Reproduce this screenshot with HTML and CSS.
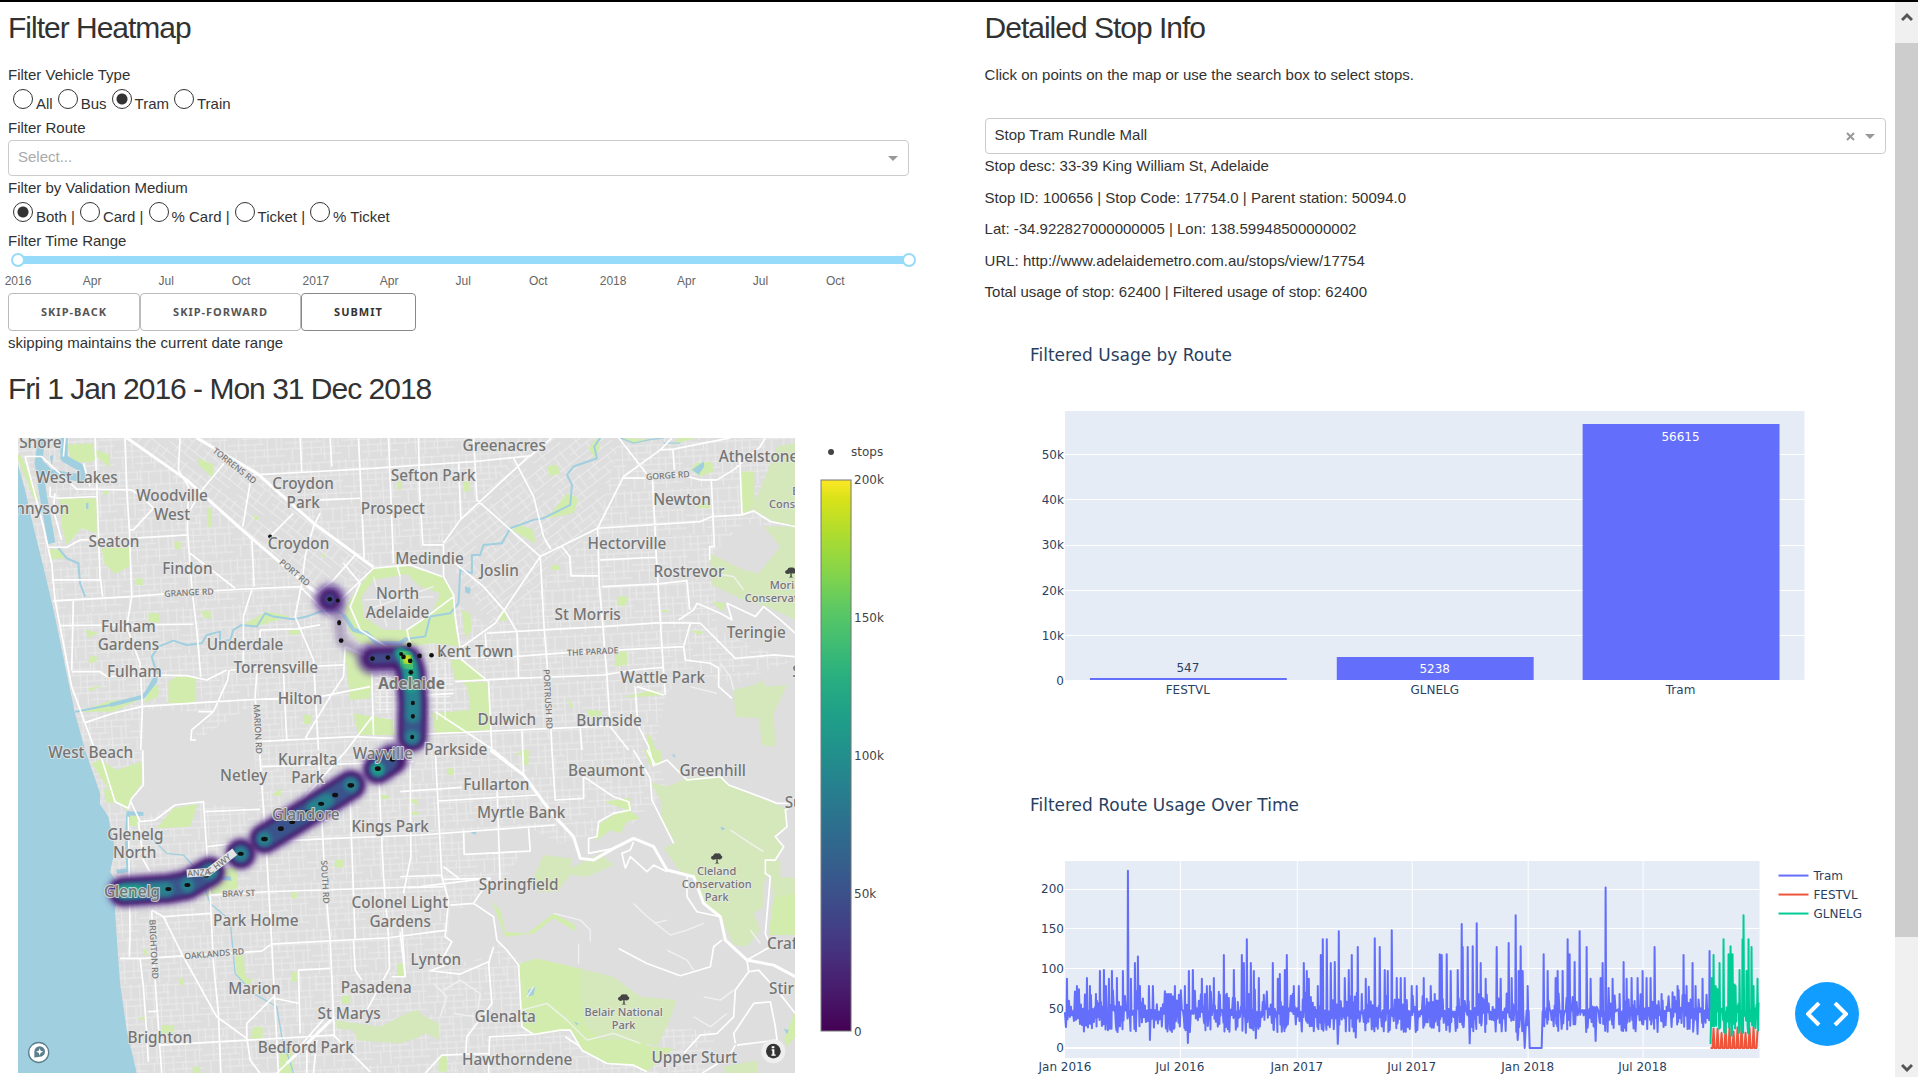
FILE: index.html
```html
<!DOCTYPE html>
<html lang="en">
<head>
<meta charset="utf-8">
<title>Filter Heatmap</title>
<link rel="stylesheet" href="styles.css">
</head>
<body>
<div class="frame">
<main class="content">
<section class="column">
  <h1 class="title">Filter Heatmap</h1>
  <div class="line">Filter Vehicle Type</div>
  <div class="radios" role="radiogroup" aria-label="Filter Vehicle Type">
    <label><input type="radio" name="vehicle"><span>All</span></label>
    <label><input type="radio" name="vehicle"><span>Bus</span></label>
    <label><input type="radio" name="vehicle" checked><span>Tram</span></label>
    <label><input type="radio" name="vehicle"><span>Train</span></label>
  </div>
  <label class="line" for="route">Filter Route</label>
  <div class="picker">
    <select id="route" class="empty"><option>Select...</option></select>
    <span class="caret"></span>
  </div>
  <div class="line">Filter by Validation Medium</div>
  <div class="radios" role="radiogroup" aria-label="Filter by Validation Medium">
    <label><input type="radio" name="medium" checked><span>Both |</span></label>
    <label><input type="radio" name="medium"><span>Card |</span></label>
    <label><input type="radio" name="medium"><span>% Card |</span></label>
    <label><input type="radio" name="medium"><span>Ticket |</span></label>
    <label><input type="radio" name="medium"><span>% Ticket</span></label>
  </div>
  <div class="line">Filter Time Range</div>
  <div class="slider">
    <div class="rail">
      <input type="range" min="0" max="1095" value="0" aria-label="Range start">
      <input type="range" min="0" max="1095" value="1095" aria-label="Range end">
    </div>
    <div class="marks">
      <span style="left:0%">2016</span><span style="left:8.31%">Apr</span><span style="left:16.62%">Jul</span><span style="left:25.02%">Oct</span>
      <span style="left:33.42%">2017</span><span style="left:41.64%">Apr</span><span style="left:49.95%">Jul</span><span style="left:58.36%">Oct</span>
      <span style="left:66.76%">2018</span><span style="left:74.98%">Apr</span><span style="left:83.29%">Jul</span><span style="left:91.69%">Oct</span>
    </div>
  </div>
  <div class="buttons"><button>Skip-back</button><button>Skip-forward</button><button class="strong">Submit</button></div>
  <div class="line">skipping maintains the current date range</div>
  <h2 class="title range">Fri 1 Jan 2016 - Mon 31 Dec 2018</h2>

  <div class="mapplot">
  <svg class="map" viewBox="54 24 2331 1905" preserveAspectRatio="xMidYMid slice" role="img" aria-label="Heatmap of Adelaide stops">
    <defs>
      <pattern id="streets" width="170" height="140" patternUnits="userSpaceOnUse" patternTransform="rotate(-3)">
        <path d="M0 8H170M0 30H80M0 48H170M40 66H170M0 84H110M0 102H170M60 122H170M10 0V48M32 8V102M52 48V140M74 0V66M80 84V140M98 8V84M118 48V140M134 0V48M146 66V122M160 0V102M22 102V140M108 102V122M64 8V30" class="lane"/>
      </pattern>
      <pattern id="diagonal" width="130" height="90" patternUnits="userSpaceOnUse" patternTransform="rotate(38)">
        <path d="M0 10H130M0 32H90M0 54H130M30 74H130M16 10V54M40 0V32M62 32V90M88 10V74M112 0V54" class="lane"/>
      </pattern>
      <pattern id="slant" width="130" height="90" patternUnits="userSpaceOnUse" patternTransform="rotate(-38)">
        <path d="M0 10H130M0 32H90M0 54H130M30 74H130M16 10V54M40 0V32M62 32V90M88 10V74M112 0V54" class="lane"/>
      </pattern>
      <filter id="soft" x="-20%" y="-20%" width="140%" height="140%"><feGaussianBlur stdDeviation="6"/></filter>
      <filter id="haze" x="-20%" y="-20%" width="140%" height="140%"><feGaussianBlur stdDeviation="9"/></filter>
    </defs>
    <rect x="54" y="24" width="2331" height="1905" class="land"/>
    <rect x="54" y="24" width="2331" height="1905" fill="url(#streets)"/>
    <path class="land" d="M590 24L1120 412L950 490L560 150L380 24ZM1590 24L1860 24L1790 295L1480 600L1260 440L1330 340Z"/>
    <path fill="url(#diagonal)" d="M590 24L1120 412L950 490L560 150L380 24Z"/>
    <path fill="url(#slant)" d="M1590 24L1860 24L1790 295L1480 600L1370 440L1330 340Z"/>
    <!-- airport, hills and other land without streets -->
    <path class="land" d="M430 836L640 848L575 930L590 930L750 830L778 1138L610 1118L520 1128L415 1170L395 1110L430 1060ZM2000 790L2060 730L2110 740L2200 760L2385 690L2385 1929L2110 1929L2150 1800L1900 1790L1740 1780L1560 1590L1440 1500L1380 1420L1500 1380L1600 1200L1680 1240L1900 1180L2000 1080L1960 960ZM1395 1200L1585 1195L1588 1265L1395 1272ZM2140 370L2230 280L2385 300L2385 700L2150 600ZM1350 1430L1440 1440L1500 1560L1400 1600L1340 1560Z"/>
    <!-- sea -->
    <path class="water" d="M54 105L75 180L100 290L130 410L165 560L200 730L225 850L255 960L300 1090L300 1122L325 1160L345 1260L330 1325L358 1370L345 1440L350 1520L360 1660L380 1800L410 1929L54 1929Z"/>
    <g class="park">
      <path d="M54 70L70 90L115 200L105 215L54 90ZM200 45L280 40L285 90L270 98L215 94ZM180 205L290 205L290 310L245 295L200 345L185 290ZM305 355L388 352L388 410L345 432L312 400ZM148 358L180 358L198 385L155 388ZM595 85L640 105L640 145L595 105ZM620 235H635V292H622ZM445 550H480V578H445ZM505 755L530 740L588 742V820H505ZM455 770L475 765V800L430 820ZM600 543H632V565H615ZM912 855H935V882H912ZM240 845L330 812L420 808L340 845ZM522 335H542V358H525ZM408 445H428V465H408ZM285 60L330 75V115L290 80ZM258 598L295 610L262 625ZM310 183H325V195H310ZM760 255L778 262L765 275ZM965 370L978 375L970 388ZM735 580L800 545L870 560L760 592ZM865 600H900V612L870 615ZM265 775L310 765L270 785ZM268 680L290 678V695L265 700Z"/>
      <path d="M1120 415L1210 405L1325 440L1360 490L1365 600L1380 650L1300 640L1230 650L1160 655L1080 640L1045 600L1035 530L1085 460ZM1035 660L1100 680L1115 730L1110 805L1050 810L1040 720ZM1060 850L1120 860L1180 870L1185 915L1075 915ZM1385 757L1465 757L1470 900L1305 910L1295 850L1410 840L1402 770ZM1350 690H1380L1430 720L1455 750H1365ZM1385 540L1410 550L1415 600L1395 625ZM1500 550L1515 545L1520 570L1500 575Z"/>
      <path d="M1640 110L1670 105L1680 130L1650 140ZM1700 190L1735 205L1720 250L1640 265ZM1535 300L1560 285L1600 300L1605 340ZM1655 405H1678V420H1655ZM1850 500L1885 500L1875 530L1850 525ZM1845 665L1880 665V705L1843 710ZM1985 540H2005V546H1985ZM2070 600L2115 605L2095 615ZM2085 100L2135 95L2140 125L2100 140L2070 120ZM2220 125H2262V220L2235 250L2222 245ZM1190 155H1205V180H1190ZM1390 155H1410V185H1390ZM2135 515L2175 520L2165 545ZM1870 800L1960 780L1995 795L1900 802ZM1760 840L1805 842L1800 860L1765 860ZM1700 800L1720 830L1710 835ZM1940 905L1955 925L1980 1000L1945 1005ZM1560 960H1585V1005H1572ZM1765 55L1790 24L1800 50L1785 85ZM1860 24L1960 30L1900 42ZM2020 45L2035 24L2090 24L2000 48ZM2090 225L2130 215V235H2095Z"/>
      <path d="M275 1000L300 990L350 1020L425 995V1060L390 1110L380 1140L350 1115ZM310 1080L340 1075L345 1118H320ZM470 1195L520 1135L593 1122L570 1190ZM385 1155L412 1160V1188H385ZM655 1320L710 1310L715 1375L605 1400L640 1360ZM705 1570L730 1560L735 1640L760 1650L740 1670L710 1630ZM815 1095L840 1075L845 1098ZM760 1790H788V1825H750ZM485 1785H522V1810H485ZM410 1765L435 1758V1770ZM1005 1290L1030 1288V1312H1002ZM875 1385H890V1405H875ZM1140 1095H1165V1108H1142ZM1220 1108H1250L1255 1130ZM535 1645L550 1642V1665H540ZM430 1557H440V1575H430ZM578 1910H600V1929H578ZM875 1625H890V1655H875ZM1192 1600H1210V1640H1190ZM840 1860L875 1855L880 1929H835ZM1025 1700L1050 1695V1720H1025Z"/>
      <path d="M1558 1600L1610 1585L1740 1615L1745 1660L1755 1760L1800 1820L1900 1820L1950 1850L2020 1855L1940 1925L1900 1905L1820 1900L1745 1860L1710 1800L1600 1813L1565 1790ZM1475 1415L1500 1440L1515 1505L1580 1510L1660 1450L1720 1480L1730 1505L1660 1465L1600 1510L1515 1520ZM1785 1235L1800 1180L1840 1155L1880 1140L1810 1115L1890 1103L1892 1145L1920 1165L1880 1175L1860 1210L1830 1200ZM1235 1145H1255V1155H1235ZM2320 1400L2385 1390V1515H2305ZM1930 960L1980 960L1985 1000L1950 1005ZM1540 975H1585V960H1575ZM1340 1015H1360V1035H1340ZM1315 1875L1340 1880V1925H1315ZM2330 1780L2350 1830L2385 1740V1820L2360 1850Z"/>
    </g>
    <g class="reserve">
      <path d="M2330 50L2385 40V295L2320 275L2262 240L2235 255L2275 190ZM2128 370L2230 420L2275 430L2340 350L2290 290L2385 290V570L2300 530L2230 510L2135 465ZM2200 780L2260 765L2290 750L2295 770L2360 765L2320 850L2325 950L2285 945L2275 865L2205 860Z"/>
      <path d="M1950 1055L2000 1070L2060 1045L2160 1035L2185 1065L2355 1135L2360 1190L2325 1220L2350 1250L2325 1290L2290 1360L2290 1430L2260 1450L2280 1500L2240 1550L2200 1545L2160 1460L2110 1420L2080 1335L2040 1325L1990 1255L2025 1235L1980 1170L1985 1120ZM2300 1290H2340V1340L2385 1345V1390L2320 1400ZM1740 1615L1840 1640L1920 1700L2030 1710L2000 1790L1970 1850L1900 1830L1800 1830L1750 1780ZM1600 1340L1630 1275L1715 1285L1710 1315L1800 1270L1840 1305L1760 1340L1710 1335L1670 1385L1610 1385ZM1200 1770L1250 1745L1315 1780L1320 1830L1280 1810L1200 1830ZM1005 1770L1140 1790L1230 1745L1260 1740V1820L1200 1840L1070 1830L1060 1800L1010 1795ZM2170 1910L2270 1890V1929H2175Z"/>
    </g>
    <path class="land" d="M1085 500L1120 450L1220 432L1260 470L1320 490L1300 540L1220 600L1150 600L1090 560Z"/>
    <g class="river">
      <path d="M1800 24L1782 50L1790 85L1720 110L1700 135L1715 165L1710 225L1630 265L1600 270L1530 295L1505 340L1450 345L1440 375L1415 375V430L1380 420L1375 520L1350 550L1290 560L1275 620L1230 625L1200 635"/>
      <path d="M1030 555L1010 540L960 545L920 560L880 568L820 560L795 550L770 590L725 585L700 600L690 630L660 635V605L620 615L605 640L560 645L520 632L475 650L455 680L470 730L430 800L330 825L225 845M175 355L200 385L235 400L240 460L255 500"/>
      <path class="wide" d="M1220 625L1200 640L1130 640L1100 610L1060 600L1030 555M470 720L465 755L430 800L330 825M385 1145L380 1220L385 1320L350 1325M385 1150L430 1152"/>
      <path class="lake" d="M125 24L115 100L130 200L155 340M192 24V85L245 115V145L150 130L110 90"/>
      <path class="thin" d="M430 1200L500 1270L550 1275L600 1330L630 1420L690 1470L705 1630L760 1690L830 1730L845 1820L880 1929M1860 24L1900 40L1945 30L1990 24M1990 40L2040 40"/>
    </g>
    <path class="water" d="M2075 120L2110 95L2112 110L2095 135ZM1585 1680L1605 1670L1600 1695L1580 1700ZM2160 1190L2175 1195L2165 1202ZM1410 1205L1430 1203L1425 1215ZM2015 975L2025 985L2022 972ZM665 1340L690 1338L695 1352L660 1350ZM258 220L265 218V240L258 235ZM150 80L160 75L155 110ZM2350 1795L2365 1800L2360 1812ZM1720 1775L1735 1780L1730 1785ZM1395 470L1412 475L1408 492L1395 488Z"/>
    <g class="minorroad">
      <path d="M1900 1420L1935 1455L2010 1515L2060 1500L2110 1480M1660 1450L1740 1470L1770 1500V1535M1735 1540V1600M1565 1740L1640 1720L1700 1770L1760 1830L1840 1810L1920 1840M1580 1700L1600 1670M2140 430L2200 440L2230 480M2160 700L2190 740L2200 780M2000 1560L2060 1590L2080 1620M2110 1700L2160 1710L2200 1680M2250 1500L2280 1540M1330 1680L1380 1650L1440 1690L1430 1760L1360 1750M1300 1660L1340 1700L1320 1760M2080 1760L2130 1790L2180 1750M2190 1200L2250 1240L2290 1265M2070 770L2150 790M1960 1480L2000 1470"/>
      <path d="M1125 745H1360M1125 762H1360M1125 780H1360M1125 800H1350M1125 818H1350M1125 838H1350M1140 720V850M1160 720V850M1180 720V910M1290 700V860M1310 690V870M1335 690V870M1120 440L1160 590M1090 510L1300 500M1200 440V600M1100 540L1300 470"/>
    </g>
    <g class="road">
      <path d="M75 80H125L230 178L395 180L430 205L460 235L400 300H390M285 24L300 440L308 500M375 24L380 180L388 300L395 500L380 590L420 700L427 830L422 960M75 80L130 290L155 400L165 510L215 770L255 880L285 960M145 352H200L240 330L390 325L565 315M540 24L535 120L565 170L562 300L575 470L590 600L602 740M570 370L705 475M160 513L390 500L520 490L720 478L900 470M750 160L728 290M755 320L762 470M672 100L610 175L570 240M900 24L905 125M760 135L950 125L1080 118L1425 95L1590 78L1655 24M1075 24L1092 385M990 24L995 110M1165 24L1180 400M955 210L1080 205M960 250L940 290L915 380L905 460L885 560L940 690L955 960M880 250L810 320M1070 370L1000 450L950 490M1120 415L1010 520M180 587L580 583M220 510L215 720M215 725H300L320 740L480 735L560 737L620 750L680 720M687 720L683 750L640 845H595M640 845L575 900L572 930H588M255 878L340 850L425 830L600 818L730 810L960 800L1110 770M755 480L730 560V700M780 600L890 597L960 585M780 600V650M690 720L1035 705M770 730L765 800L775 935M770 935L1060 920L1180 925M850 730L860 930M1035 650L1030 740L990 800L915 925M1120 855L1040 960L870 1150M1115 730L1120 915M1035 650L1110 685M900 470L990 560M155 450H305M150 170V200L180 205L290 200M165 190L160 240L185 330M930 470L1010 530M195 25L190 80M250 100L270 170M1030 400L1080 460L1050 530L1080 600L1160 650M1200 440L1190 405M1120 415L1230 405L1325 440"/>
      <path d="M1255 24L1258 180L1268 345H1330V440L1360 495L1365 560L1385 690L1465 755L1475 960M1590 75L1380 270L1330 340M1420 24L1430 210L1620 380M1540 85L1600 200L1630 320L1652 358M1375 100L1382 270M1620 380L1792 295L1870 140L1980 60L2015 24M1620 380L1632 600L1645 760L1655 960M1620 380L1485 580L1380 655M1365 400L1450 470L1515 545L1550 605L1555 745M1792 295L1797 470L1808 590L1820 740L1830 890L1885 960M1855 24L1957 155L1968 380L1980 570L1990 730L1995 795M1792 295L2100 275L2135 260L2225 255L2260 243L2310 275L2385 290M1870 145H1930L2000 130L2060 140L2100 150H2150L2200 120L2280 50L2295 24M1980 60L2020 58L2160 30L2190 24M2018 60L2022 120M2133 150L2142 350H2128V390M1800 390L1968 382M1805 470L1975 462L2060 452L2068 540M1685 350L1708 380L1712 438H1795M1460 610L1630 600L1810 590L1980 578L2100 580L2150 630L2205 685L2320 675L2385 680M1350 685L1540 680L1700 668L2050 650M1365 755L1550 745L1810 735L1900 720L1990 712M2218 80L2225 255M2070 580L2050 650L2055 690L2130 700L2155 715V770L2195 805M2035 570L2080 540L2090 520L2160 550L2195 570L2180 520L2265 560L2290 530L2340 570L2385 610M1275 912L1660 895L1830 888L1910 880L1945 950L1960 1010M1910 770L1990 795M1905 770L1912 880M1305 845L1480 960L1570 1035M1740 895L1745 960M1565 900L1570 1030M1230 640L1220 600L1280 560L1360 500M1455 610L1460 690M1200 800L1360 790"/>
      <path d="M300 970L345 1115L385 1135L395 1105L430 1065L428 960M390 1110L420 1175L465 1170L525 1125L610 1115L620 1260L630 1390L640 1600L655 1750L662 1929M615 1145L780 1138M778 960L800 1280L815 1540L835 1929M630 1395L800 1385L1260 1370L1460 1345M620 1250L700 1240L1000 1225L1260 1215L1665 1185M955 970L975 1360L990 1530L1003 1820M1050 1110L1065 1530M1135 1020L1150 1340L1165 1520M810 1542L1165 1523L1340 1500M385 1160L390 1520L388 1580M455 1440L460 1580L485 1929M455 1440L490 1460L550 1580L650 1760L740 1825M485 1460L630 1450M360 1585H430L785 1563L810 1545M420 1585L430 1670L440 1810L445 1895M445 1745L475 1743M480 1845L740 1830L1000 1815L1110 1925M825 1695L740 1780V1820L750 1890L780 1929M825 1705L900 1720M895 1620L900 1810M895 1620L990 1615M1000 1760L860 1900L830 1929M985 1750L890 1860M1060 1530L1065 1620L1085 1650M1165 1520L1168 1615L1100 1740M415 1175L430 1290L450 1325M920 1860V1929M950 1830L940 1929M785 1010L1240 995M1205 1480L1215 1640H1175"/>
      <path d="M1200 1085L1385 1072M1315 1113L1610 1095M1655 960L1665 1110L1750 1105V1040L1840 1100L1885 1115L1890 1140L1840 1150L1795 1175L1790 1220L1765 1225V1270L1840 1255M1900 960L1950 1045L1955 1110L1990 1180L2020 1240M1940 960L1965 1005L2000 990L2060 1050L2160 1040L2185 1065L2280 1100L2330 1120H2385M2385 1120L2355 1140L2360 1190L2325 1220L2350 1250L2325 1290H2295V1330L2310 1340L2295 1510L2310 1550L2240 1590M1390 1200L1392 1273L1590 1263L1585 1195M1490 1060L1500 1360M1305 960L1325 1340L1345 1410L1335 1520L1355 1535L1330 1580L1350 1600L1290 1622L1380 1632L1465 1595M1330 1348L1470 1345L1420 1420L1350 1425M1330 1310L1380 1348M1420 1420L1480 1460L1490 1530L1520 1560L1555 1605L1565 1790L1600 1813L1680 1800L1710 1800L1745 1860L1820 1900L1900 1905L1940 1925M1480 1550L1465 1600L1475 1720L1400 1820L1395 1890M1465 1929L1468 1820L1600 1813M1275 1929L1325 1875L1465 1870M1855 1555L1940 1600L2040 1637L2130 1610L2140 1550L2165 1530M1875 1315L1865 1270L1890 1260L1900 1235M1875 1315L1890 1280L1940 1325L1960 1305L2000 1325M2060 1340V1400L2090 1445L2160 1460M2240 1590L2245 1625L2205 1680L2200 1760L2150 1810L2100 1815L2050 1870M2245 1625L2275 1620L2330 1680L2385 1750M2205 1840L2200 1810L2260 1720L2310 1715L2325 1790L2330 1830L2210 1845M1695 1820L1740 1850M1230 1000L1232 1280L1210 1390M1200 1505L1215 1640M1200 1340L1325 1335M1220 1373L1330 1370M2205 1845L2185 1880L2105 1929"/>
    </g>
    <g class="highway">
      <path d="M380 24L560 150L720 295L950 492M590 24L770 130L940 280L1120 412M1470 960L1570 1035L1655 1150L1720 1220L1740 1285L1780 1290L1840 1255L1900 1225L1960 1250L2000 1320L2080 1340L2110 1420L2160 1460L2175 1530L2240 1590L2320 1605L2385 1640M1003 1760L860 1900"/>
    </g>
    <!-- density along the tram line -->
    <g class="faint" filter="url(#haze)"><path d="M989 508L1015 530L1017 578L1023 632L1070 665"/></g>
    <g class="heat" filter="url(#haze)" stroke="#5d3a94" stroke-width="96" opacity=".75"><path d="M370 1385L505 1376L562 1365L630 1325M722 1271V1272M793 1226L843 1196L963 1121L1052 1065M1133 1017L1180 985M1236 920L1238 819L1232 727L1222 692L1163 684L1117 686M989 508V509"/></g>
    <g class="heat" filter="url(#soft)" stroke="#46186b" stroke-width="80"><path d="M370 1385L505 1376L562 1365L630 1325M722 1271V1272M793 1226L843 1196L963 1121L1052 1065M1133 1017L1175 990M1236 920L1238 819L1232 727L1220 694"/></g>
    <g class="heat" filter="url(#soft)" stroke="#46186b" stroke-width="60"><path d="M1210 684L1163 684L1117 686M989 508V509"/></g>
    <g class="heat" filter="url(#soft)" stroke="#404a88" stroke-width="34"><path d="M1210 680L1163 684L1120 686M989 508V509"/></g>
    <g class="heat" filter="url(#soft)" stroke="#3b528b" stroke-width="58"><path d="M370 1385L505 1376L562 1365L630 1325M722 1271V1272M793 1226L843 1196L963 1121L1052 1065M1133 1017L1165 995M1236 920L1238 819L1232 727L1220 690"/></g>
    <g class="heat" filter="url(#soft)" stroke="#26828e" stroke-width="42"><path d="M372 1385L500 1377M562 1365V1366M630 1326V1327M722 1271V1272M793 1226V1227M940 1135L980 1111M1052 1065V1066M1133 1017V1018M1236 920V921M1238 860L1238 800L1232 727L1215 680"/></g>
    <g class="heat" filter="url(#soft)" stroke="#1fa187" stroke-width="34"><path d="M365 1383L410 1382M1133 1017V1018M1234 770L1230 700L1200 668"/></g>
    <g class="heat" filter="url(#soft)" stroke="#4ac16d" stroke-width="36"><path d="M1231 708L1206 672"/></g>
    <g class="heat" filter="url(#soft)" stroke="#d2e21b" stroke-width="26"><path d="M1229 696L1214 680"/></g>
    <g class="stops">
      <circle cx="810" cy="320" r="6"/><circle cx="989" cy="508" r="7"/><circle cx="1013" cy="512" r="6"/><ellipse cx="1017" cy="578" rx="6" ry="8"/><circle cx="1023" cy="632" r="7"/><circle cx="1117" cy="686" r="7"/><circle cx="1163" cy="683" r="7"/><circle cx="1203" cy="672" r="6"/><circle cx="1210" cy="681" r="7"/><circle cx="1230" cy="693" r="7"/><circle cx="1227" cy="645" r="7"/><circle cx="1258" cy="678" r="7"/><circle cx="1294" cy="676" r="7"/><circle cx="1322" cy="674" r="6"/><circle cx="1232" cy="727" r="7"/><ellipse cx="1238" cy="819" rx="6" ry="7"/><ellipse cx="1238" cy="859" rx="6" ry="7"/><ellipse cx="1236" cy="921" rx="6" ry="7"/>
      <ellipse cx="1133" cy="1016" rx="9" ry="7"/><ellipse cx="1177" cy="988" rx="9" ry="7"/><ellipse cx="1052" cy="1066" rx="10" ry="7"/><ellipse cx="1005" cy="1095" rx="9" ry="7"/><ellipse cx="963" cy="1121" rx="9" ry="6"/><ellipse cx="925" cy="1145" rx="9" ry="6"/><ellipse cx="876" cy="1176" rx="9" ry="6"/><ellipse cx="842" cy="1196" rx="9" ry="7"/><ellipse cx="793" cy="1227" rx="10" ry="7"/><ellipse cx="722" cy="1271" rx="9" ry="6"/><ellipse cx="640" cy="1320" rx="10" ry="6"/><ellipse cx="618" cy="1336" rx="9" ry="6"/><ellipse cx="562" cy="1365" rx="9" ry="6"/><ellipse cx="505" cy="1377" rx="9" ry="6"/>
    </g>
    <g class="place">
      <text x="121" y="54">Shore</text><text x="230" y="160">West Lakes</text><text x="207" y="252" class="end">Tennyson</text>
      <text x="516" y="214">Woodville</text><text x="516" y="270">West</text><text x="342" y="352">Seaton</text><text x="562" y="433">Findon</text>
      <text x="909" y="177">Croydon</text><text x="909" y="233">Park</text><text x="895" y="357">Croydon</text>
      <text x="385" y="605">Fulham</text><text x="385" y="661">Gardens</text><text x="403" y="740">Fulham</text>
      <text x="735" y="659">Underdale</text><text x="827" y="730">Torrensville</text><text x="900" y="823">Hilton</text><text x="272" y="984">West Beach</text>
      <text x="1299" y="154">Sefton Park</text><text x="1178" y="253">Prospect</text><text x="1288" y="401">Medindie</text>
      <text x="1192" y="508">North</text><text x="1192" y="564">Adelaide</text><text x="1512" y="64">Greenacres</text><text x="2155" y="97" class="start">Athelstone</text>
      <text x="2045" y="225">Newton</text><text x="1880" y="356">Hectorville</text><text x="2066" y="441">Rostrevor</text><text x="1497" y="438">Joslin</text>
      <text x="1762" y="571">St Morris</text><text x="2268" y="624">Teringie</text><text x="1425" y="682">Kent Town</text><text x="1234" y="776" class="city">Adelaide</text>
      <text x="1987" y="760">Wattle Park</text><text x="1520" y="885">Dulwich</text><text x="1826" y="888">Burnside</text><text x="1367" y="974">Parkside</text>
      <text x="1148" y="987">Wayville</text><text x="923" y="1005">Kurralta</text><text x="923" y="1060">Park</text><text x="731" y="1053">Netley</text>
      <text x="917" y="1171">Glandore</text><text x="1170" y="1205">Kings Park</text><text x="406" y="1229">Glenelg</text><text x="404" y="1285">North</text><text x="396" y="1401">Glenelg</text>
      <text x="767" y="1489">Park Holme</text><text x="1199" y="1434">Colonel Light</text><text x="1200" y="1490">Gardens</text><text x="763" y="1692">Marion</text>
      <text x="1128" y="1688">Pasadena</text><text x="1047" y="1766">St Marys</text><text x="1307" y="1606">Lynton</text><text x="479" y="1839">Brighton</text><text x="917" y="1869">Bedford Park</text>
      <text x="1818" y="1038">Beaumont</text><text x="2137" y="1037">Greenhill</text><text x="1488" y="1081">Fullarton</text><text x="1563" y="1165">Myrtle Bank</text>
      <text x="1555" y="1379">Springfield</text><text x="1515" y="1777">Glenalta</text><text x="1551" y="1905">Hawthorndene</text><text x="2082" y="1899">Upper Sturt</text>
      <text x="2353" y="1133" class="start">Summertown</text><text x="2300" y="1557" class="start">Crafers</text><text x="2306" y="1692" class="start">Stirling</text><text x="2376" y="740" class="start">S</text>
    </g>
    <g class="place small">
      <text x="2149" y="1334">Cleland</text><text x="2149" y="1374">Conservation</text><text x="2149" y="1414">Park</text>
      <text x="1870" y="1758">Belair National</text><text x="1870" y="1798">Park</text>
      <text x="2308" y="478" class="start">Morialta</text><text x="2233" y="517" class="start">Conservation</text><text x="2376" y="194" class="start">B</text><text x="2306" y="234" class="start">Conservation</text>
    </g>
    <g class="tree">
      <path id="tree" d="M2133 1286q-3-7 5-9q4-9 13-7q10-2 11 6q7 3 2 9q-5 5-12 2v10l5 3h-14l5-3v-10q-10 5-15-1z"/>
      <use href="#tree" x="-279" y="423"/><use href="#tree" x="222" y="-857"/>
    </g>
    <g class="street">
      <text transform="translate(698 115) rotate(38)">TORRENS RD</text><text transform="translate(878 435) rotate(40)">PORT RD</text>
      <text transform="translate(567 497) rotate(-3)">GRANGE RD</text><text transform="translate(764 898) rotate(87)">MARION RD</text>
      <text transform="translate(2003 146) rotate(-4)">GORGE RD</text><text transform="translate(1778 674) rotate(-3)">THE PARADE</text>
      <text transform="translate(1634 808) rotate(87)">PORTRUSH RD</text><text transform="translate(716 1399) rotate(-2)">BRAY ST</text>
      <text transform="translate(966 1356) rotate(87)">SOUTH RD</text><text transform="translate(643 1580) rotate(-5)">OAKLANDS RD</text>
      <text transform="translate(452 1558) rotate(87)">BRIGHTON RD</text>
      <path class="band" d="M560 1330L625 1326L704 1265"/>
      <path id="anzac" d="M562 1339L630 1335L716 1268" fill="none"/>
      <text class="start bare"><textPath href="#anzac">ANZAC HWY</textPath></text>
    </g>
    <g><circle cx="116" cy="1867" r="30" fill="#fff" stroke="#5b7f8d" stroke-width="4"/><path d="M103 1882V1864a16 16 0 1 1 16 16Z" fill="#5b7f8d"/><path d="M119 1854l3 8 8 3-8 3-3 8-3-8-8-3 8-3z" fill="#fff"/></g>
    <g><circle cx="2319" cy="1863" r="36" fill="#eee"/><circle cx="2319" cy="1863" r="22" fill="#333"/><path d="M2314 1857h8v16h4v4h-13v-4h3v-12h-3zM2314 1848h8v6h-8z" fill="#fff"/></g>
  </svg>
  <svg class="scale" viewBox="0 0 114 635" role="img" aria-label="Colour scale">
    <defs><linearGradient id="viridis" x1="0" y1="1" x2="0" y2="0">
      <stop offset="0" stop-color="#440154"/><stop offset=".065" stop-color="#48186a"/><stop offset=".13" stop-color="#472d7b"/><stop offset=".19" stop-color="#424086"/><stop offset=".255" stop-color="#3b528b"/><stop offset=".32" stop-color="#33638d"/><stop offset=".385" stop-color="#2c728e"/><stop offset=".45" stop-color="#26828e"/><stop offset=".51" stop-color="#21918c"/><stop offset=".575" stop-color="#1fa088"/><stop offset=".64" stop-color="#28ae80"/><stop offset=".7" stop-color="#3fbc73"/><stop offset=".77" stop-color="#5ec962"/><stop offset=".83" stop-color="#84d44b"/><stop offset=".9" stop-color="#addc30"/><stop offset=".965" stop-color="#d8e219"/><stop offset="1" stop-color="#fde725"/>
    </linearGradient></defs>
    <circle cx="36" cy="14" r="3" fill="#444"/>
    <rect x="26" y="42" width="30" height="551" fill="url(#viridis)" stroke="#777"/>
    <g class="tick dark"><text x="56" y="18">stops</text><text x="59" y="46">200k</text><text x="59" y="184">150k</text><text x="59" y="322">100k</text><text x="59" y="460">50k</text><text x="59" y="598">0</text></g>
  </svg>
  </div>
</section>

<section class="column">
  <h1 class="title">Detailed Stop Info</h1>
  <label class="line hint" for="stop">Click on points on the map or use the search box to select stops.</label>
  <div class="picker">
    <select id="stop"><option>Stop Tram Rundle Mall</option></select>
    <button class="clear" aria-label="Clear"><svg width="9" height="9" viewBox="0 0 9 9"><path d="M1 1L8 8M8 1L1 8" stroke="#999" stroke-width="2"/></svg></button>
    <span class="caret"></span>
  </div>
  <div class="details">
    <p>Stop desc: 33-39 King William St, Adelaide</p>
    <p>Stop ID: 100656 | Stop Code: 17754.0 | Parent station: 50094.0</p>
    <p>Lat: -34.922827000000005 | Lon: 138.59948500000002</p>
    <p>URL: http://www.adelaidemetro.com.au/stops/view/17754</p>
    <p>Total usage of stop: 62400 | Filtered usage of stop: 62400</p>
  </div>
  <svg class="chart" viewBox="0 0 902 450" role="img" aria-label="Filtered Usage by Route">
    <text class="charttitle" x="45" y="57">Filtered Usage by Route</text>
    <rect class="plot" x="80" y="107" width="740" height="269"/>
    <path class="grid" d="M80 150.5H820M80 195.5H820M80 241.5H820M80 286.5H820M80 331.5H820"/>
    <path class="bar" d="M105 374H302V376H105ZM352 353H549V376H352ZM598 120H795V376H598Z"/>
    <g class="tick end"><text x="79" y="155">50k</text><text x="79" y="200">40k</text><text x="79" y="245">30k</text><text x="79" y="291">20k</text><text x="79" y="336">10k</text><text x="79" y="381">0</text></g>
    <g class="tick mid"><text x="203" y="368">547</text><text x="450" y="369" class="white">5238</text><text x="696" y="137" class="white">56615</text><text x="203" y="390">FESTVL</text><text x="450" y="390">GLNELG</text><text x="696" y="390">Tram</text></g>
  </svg>
  <svg class="chart" viewBox="0 0 902 450" role="img" aria-label="Filtered Route Usage Over Time">
    <text class="charttitle" x="45" y="57">Filtered Route Usage Over Time</text>
    <rect class="plot" x="80" y="107" width="695" height="197"/>
    <path class="grid" d="M80 135.5H775M80 174.5H775M80 214.5H775M80 254.5H775M195.5 107V304M312.5 107V304M427.5 107V304M543.5 107V304M658.5 107V304"/>
    <path class="zero" d="M80 294H775"/>
    <path id="tram" class="series" stroke="#636efa"/><path id="festvl" class="series" stroke="#ef553b"/><path id="glnelg" class="series" stroke="#00cc96"/>
    <g class="tick end"><text x="79" y="139">200</text><text x="79" y="179">150</text><text x="79" y="219">100</text><text x="79" y="259">50</text><text x="79" y="298">0</text></g>
    <g class="tick mid"><text x="80" y="317">Jan 2016</text><text x="195" y="317">Jul 2016</text><text x="312" y="317">Jan 2017</text><text x="427" y="317">Jul 2017</text><text x="543" y="317">Jan 2018</text><text x="658" y="317">Jul 2018</text></g>
    <path class="series" stroke="#636efa" d="M794 121.5H824"/><path class="series" stroke="#ef553b" d="M794 140.5H824"/><path class="series" stroke="#00cc96" d="M794 159.5H824"/>
    <g class="tick"><text x="829" y="126">Tram</text><text x="829" y="145">FESTVL</text><text x="829" y="164">GLNELG</text></g>
  </svg>
</section>
</main>
<aside class="scrollbar">
  <button aria-label="Scroll up"><svg width="12" height="10" viewBox="0 0 12 10"><path d="M1 8L6 3L11 8" fill="none" stroke="#555" stroke-width="3"/></svg></button>
  <div class="track"><div class="thumb"></div></div>
  <button aria-label="Scroll down"><svg width="12" height="10" viewBox="0 0 12 10"><path d="M1 2L6 7L11 2" fill="none" stroke="#555" stroke-width="3"/></svg></button>
</aside>
</div>
<button class="debug" aria-label="Developer tools"><svg width="42" height="24" viewBox="0 0 42 24"><path d="M13 1L2 12L13 23M29 1L40 12L29 23" fill="none" stroke="#fff" stroke-width="4"/></svg></button>
<script src="charts.js"></script>
</body>
</html>
```
FILE: styles.css
```css
* { box-sizing: border-box; }
body { margin: 0; background: #fff; color: #323232; font: 15px/24px "Liberation Sans", Arial, sans-serif; }
.frame { display: flex; height: 100vh; border-top: 2px solid #000; overflow: hidden; }
.content { flex: 1; display: grid; grid-template-columns: 48% 48%; justify-content: space-between; align-items: start; padding: 6px 9px 0 8px; }
.column { min-width: 0; }
.title { margin: 0 0 16px; font-size: 30px; line-height: 39px; font-weight: 400; letter-spacing: -1px; }
.range { margin: 14px 0 30px; }
.line { display: block; }
.hint { margin-bottom: 31px; }

.radios { display: flex; height: 29px; }
.radios label { display: flex; align-items: flex-start; gap: 3px; }
.radios span { margin-top: 5px; }
.radios input { appearance: none; width: 20px; height: 20px; margin: 2px 0 0 5px; border: 1px solid #333; border-radius: 50%; background: #fff; }
.radios input:checked { background: radial-gradient(circle, #333 5px, #fff 6px); }

.picker { display: flex; align-items: center; height: 36px; border: 1px solid #ccc; border-radius: 4px; padding-right: 10px; }
.picker select { appearance: none; flex: 1; align-self: stretch; min-width: 0; padding: 0 9px 2px; border: 0; background: none; color: #333; font: inherit; }
.picker .empty { color: #aaa; }
.caret { border: 5px solid transparent; border-top-color: #999; border-bottom: 0; }
.clear { display: flex; padding: 0; margin-right: 10px; border: 0; background: none; }

.slider { margin: 0 0 0 10px; height: 40px; }
.rail { display: grid; align-items: center; height: 14px; background: linear-gradient(#96dbfa, #96dbfa) center / 100% 8px no-repeat; }
.rail input { grid-area: 1 / 1; appearance: none; height: 14px; margin: 0 -7px; background: none; pointer-events: none; }
.rail input::-webkit-slider-thumb { appearance: none; width: 14px; height: 14px; border: 2px solid #96dbfa; border-radius: 50%; background: #fff; pointer-events: auto; }
.marks { position: relative; height: 24px; color: #666; font-size: 12px; }
.marks span { position: absolute; top: 2px; transform: translateX(-50%); }

.buttons { display: flex; }
.buttons button { height: 38px; padding: 0 32px; border: 1px solid #bbb; border-radius: 4px; background: #fff; color: #555; font: 700 11px/36px "Noto Sans", sans-serif; letter-spacing: 1px; text-transform: uppercase; }
.buttons .strong { border-color: #888; color: #333; }

.mapplot { display: grid; grid-template-columns: 777fr 114fr; margin-left: 10px; }
.map, .scale { display: block; width: 100%; height: 635px; overflow: hidden; }
.land { fill: #dedede; }
.water { fill: #a0cfdf; }
.lane { fill: none; stroke: #ebebeb; stroke-width: 3; }
.park { fill: #d2ecae; }
.reserve { fill: #d5e8bb; }
.river { fill: none; stroke: #a0cfdf; stroke-width: 6; stroke-linejoin: round; }
.river .wide { stroke-width: 12; }
.river .lake { stroke-width: 22; }
.river .thin { stroke-width: 4; }
.minorroad { fill: none; stroke: #f1f1f1; stroke-width: 4; stroke-linejoin: round; }
.road { fill: none; stroke: #fff; stroke-width: 5; stroke-linejoin: round; }
.highway { fill: none; stroke: #fff; stroke-width: 9; stroke-linejoin: round; }
.heat, .faint { fill: none; stroke-linecap: round; stroke-linejoin: round; }
.faint { stroke: #8d7aa8; stroke-width: 34; opacity: .6; }
.stops { fill: #111; }
.place { fill: #757575; stroke: #e8e8e8; stroke-width: 6; stroke-linejoin: round; paint-order: stroke; font: 500 46px "Noto Sans", "Open Sans", sans-serif; text-anchor: middle; stroke-opacity: .8; }
.place .city { font-weight: 700; }
.small { font-size: 33px; }
.street { fill: #757575; stroke: #e4e4e4; stroke-width: 6; paint-order: stroke; font: 500 26px "Noto Sans", sans-serif; text-anchor: middle; }
.street #anzac, .street .bare { stroke: none; }
.street .band { fill: none; stroke-width: 24; }
.place .start, .street .start { text-anchor: start; }
.place .end { text-anchor: end; }
.tree { fill: #444; }

.details { display: flex; flex-direction: column; justify-content: space-between; height: 150px; }
.details p { margin: 0; }
.chart { display: block; width: 100%; height: 450px; }
.charttitle { fill: #2a3f5f; font: 17px "DejaVu Sans", Verdana, sans-serif; }
.tick { fill: #2a3f5f; font: 12px "DejaVu Sans", Verdana, sans-serif; }
.tick.dark { fill: #444; }
.tick.end { text-anchor: end; }
.tick.mid { text-anchor: middle; }
.tick .white { fill: #fff; }
.plot { fill: #e5ecf6; }
.grid { fill: none; stroke: #fff; }
.zero { stroke: #fff; stroke-width: 2; }
.bar { fill: #636efa; }
.series { fill: none; stroke-width: 2; stroke-linejoin: round; }

.scrollbar { display: flex; flex-direction: column; width: 23px; background: #f0f0f0; }
.scrollbar button { display: flex; align-items: center; justify-content: center; height: 30px; padding: 0; border: 0; background: none; }
.scrollbar button:last-child { height: 18px; }
.track { flex: 1; padding-top: 11px; }
.thumb { height: 88%; background: #cdcdcd; }
.debug { position: fixed; right: 59px; bottom: 31px; display: flex; align-items: center; justify-content: center; width: 64px; height: 64px; padding: 0; border: 0; border-radius: 50%; background: #119dff; }
```
FILE: charts.js
```js
// Each pair is [horizontal position in the plot, validations]; ordinary days are filled in between the peaks.
const tramPeaks = [[2,87],[12,78],[22,88],[25,78],[31,68],[35,97],[39,98],[41,78],[44,87],[47,97],[52,88],[58,97],[63,223],[66,87],[70,107],[73,115],[75,78],[84,78],[88,78],[102,68],[106,68],[110,78],[114,67],[120,78],[124,97],[128,98],[137,87],[140,68],[142,78],[145,78],[149,88],[155,67],[159,117],[164,63],[169,98],[173,58],[177,117],[179,107],[182,137],[186,107],[189,97],[194,88],[199,67],[208,107],[213,87],[215,93],[220,98],[222,117],[229,78],[234,78],[239,107],[242,97],[244,87],[253,78],[256,117],[258,137],[262,137],[266,107],[270,108],[274,147],[280,88],[284,98],[287,117],[293,127],[297,68],[301,87],[304,77],[310,138],[315,127],[320,98],[323,97],[327,148],[332,88],[336,88],[340,88],[347,78],[352,78],[359,88],[366,78],[370,68],[375,118],[377,117],[382,118],[386,97],[393,98],[397,156],[398,127],[403,127],[408,128],[412,157],[416,107],[421,87],[432,127],[436,87],[444,132],[447,88],[451,167],[454,97],[456,128],[458,97],[463,78],[479,118],[483,97],[491,88],[493,97],[498,97],[503,137],[505,118],[510,108],[515,147],[522,127],[526,87],[536,88],[538,107],[541,202],[548,87],[555,68],[559,108],[562,87],[567,88],[573,88],[578,97],[582,88],[586,88],[590,127],[597,68],[608,70],[613,78],[619,117],[622,78],[628,107],[631,78],[638,87],[645,122]];
const glnelgPeaks = [[647,88],[649,117],[651,78],[655,107],[659,137],[664,118],[666,128],[668,118],[671,78],[675,98],[678,137],[679,167],[682,97],[684,137],[687,127],[689,78],[693,87]];

let seed = 7;
function random() {
  seed = (seed * 16807) % 2147483647;
  return seed / 2147483647;
}

function points(peaks, from, to, low, spread) {
  const list = [];
  for (let x = from; x <= to; x += 1) {
    const peak = peaks.find(p => p[0] === x);
    if (peak) {
      list.push([x - 0.4, low + random() * spread], [x, peak[1]], [x + 0.6, low + random() * spread]);
    } else if (x === 460 || (x > 464 && x < 478)) {
      list.push([x, 0]);
    } else if (x % 2) {
      const dip = random() > 0.9 ? 16 : 0;
      list.push([x, low + random() * spread - dip]);
    } else {
      list.push([x, 45 + random() * random() * 35]);
    }
  }
  return list;
}

function draw(id, list) {
  document.getElementById(id).setAttribute("d",
    "M" + list.map(p => (80 + p[0]).toFixed(1) + " " + (294 - Math.max(0, p[1]) * 0.795).toFixed(1)).join("L"));
}

draw("tram", points(tramPeaks, 0, 645, 20, 30));
const glnelg = points(glnelgPeaks, 647, 694, 18, 34);
glnelg.unshift([646, 5]);
draw("glnelg", glnelg);

const festival = [];
for (let x = 646; x < 692; x += 4) {
  festival.push([x, 0], [x + 2, 0], [x + 3, 18 + random() * 10]);
}
draw("festvl", festival);
```
